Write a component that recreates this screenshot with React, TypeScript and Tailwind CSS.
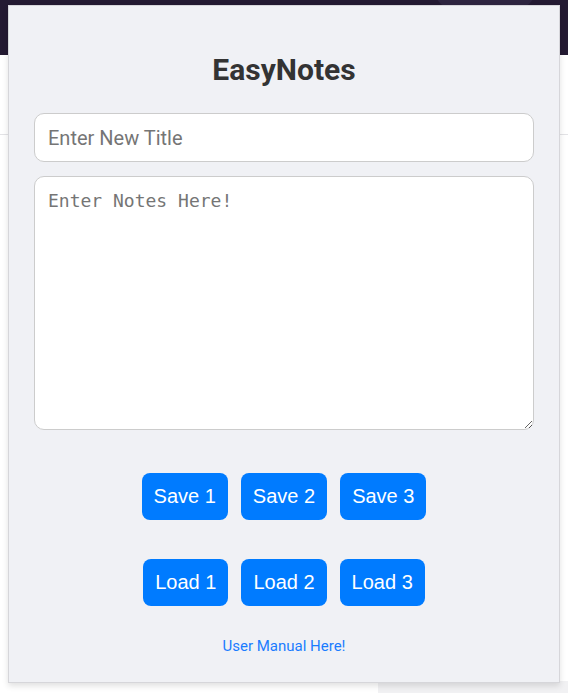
import { useState } from "react";

export default function App() {
  const [title, setTitle] = useState("");
  const [notes, setNotes] = useState("");

  const slots = [1, 2, 3];

  return (
    <div className="relative w-[568px] h-[693px] overflow-hidden bg-white">
      {/* page behind the popup */}
      <div className="relative h-[55px] bg-[#241a32] overflow-hidden">
        <div className="absolute left-[430px] top-[-60px] w-[110px] h-[75px] rounded-full bg-[#2e2540]" />
      </div>
      <div className="h-[80px] border-b border-[#e3e3e6]" />
      <div className="absolute right-0 bottom-0 w-[190px] h-[12px] bg-[#f1f1f3]" />

      {/* popup */}
      <div className="absolute left-[8px] top-[5px] w-[552px] h-[678px] border border-[#d6d6da] bg-[#f0f1f5] shadow-[0_3px_6px_rgba(0,0,0,0.12)] px-[25px] pt-[48px] flex flex-col items-center font-['Roboto',sans-serif]">
        <h1 className="text-[30px] leading-[32px] font-bold text-[#333333]">EasyNotes</h1>

        <input
          className="mt-[27px] w-full h-[49px] rounded-[10px] border border-[#cccccc] bg-white px-[13px] text-[20px] text-[#333] placeholder:text-[#757575] outline-none font-['Roboto',sans-serif]"
          placeholder="Enter New Title"
          value={title}
          onChange={(e) => setTitle(e.target.value)}
        />

        <textarea
          className="mt-[14px] w-full h-[254px] rounded-[10px] border border-[#cccccc] bg-white px-[13px] py-[13px] text-[18px] leading-[22px] text-[#333] placeholder:text-[#757575] outline-none font-['DejaVu_Sans_Mono',monospace]"
          placeholder="Enter Notes Here!"
          value={notes}
          onChange={(e) => setNotes(e.target.value)}
        />

        <div className="mt-[43px] flex gap-[13px]">
          {slots.map((n) => (
            <button
              key={"s" + n}
              className="h-[47px] px-3 rounded-[8px] bg-[#007bff] text-white text-[20px] leading-[23px] font-['Liberation_Sans',Arial,sans-serif]"
            >
              Save {n}
            </button>
          ))}
        </div>

        <div className="mt-[39px] flex gap-[13px]">
          {slots.map((n) => (
            <button
              key={"l" + n}
              className="h-[47px] px-3 rounded-[8px] bg-[#007bff] text-white text-[20px] leading-[23px] font-['Liberation_Sans',Arial,sans-serif]"
            >
              Load {n}
            </button>
          ))}
        </div>

        <a href="#" className="mt-[31px] text-[15px] leading-[18px] text-[#1a7cff]">
          User Manual Here!
        </a>
      </div>
    </div>
  );
}
